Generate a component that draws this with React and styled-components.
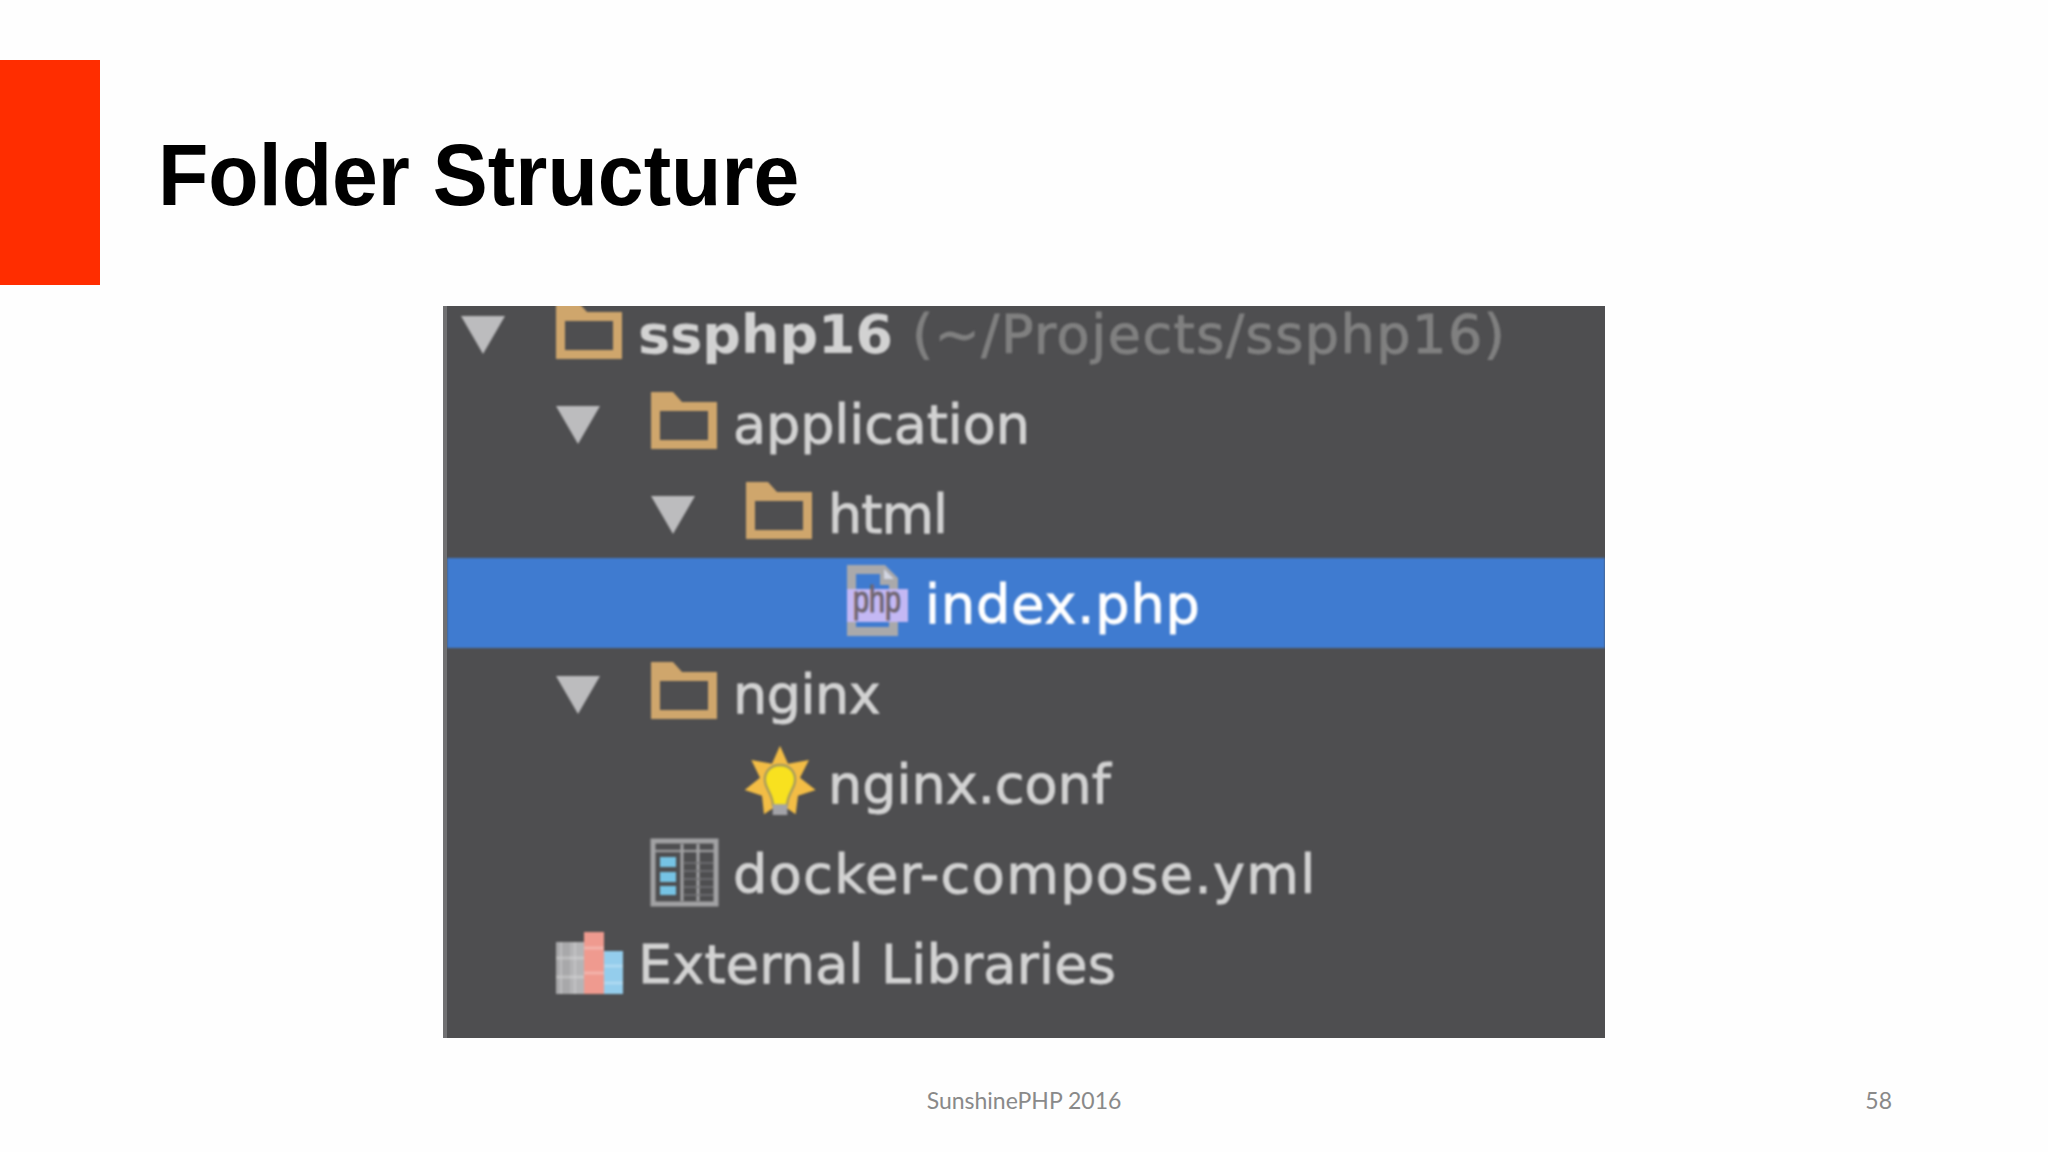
import styled, { createGlobalStyle } from 'styled-components'

const GlobalStyle = createGlobalStyle`
  html, body {
    margin: 0;
    background: #fefefe;
  }
`

const Slide = styled.div`
  width: 2048px;
  height: 1152px;
  padding-top: 60px;
  box-sizing: border-box;
  display: flex;
  flex-direction: column;
  overflow: hidden;
`

const Header = styled.header`
  display: flex;
  align-items: center;
  gap: 58px;
`

const RedBar = styled.div`
  width: 100px;
  height: 225px;
  background: #ff2d00;
`

const Title = styled.h1`
  margin: 5px 0 0;
  color: #000;
  font-family: 'Liberation Sans', sans-serif;
  font-size: 88px;
  font-weight: 700;
  transform: scaleX(0.937);
  transform-origin: left center;
`

const Tree = styled.section`
  width: 1162px;
  height: 732px;
  margin: 21px auto 0;
  box-sizing: border-box;
  border-left: 4px solid #707072;
  background: #4e4e50;
`

const Rows = styled.div`
  filter: blur(0.8px);
  clip-path: inset(0);
`

const Row = styled.div`
  height: ${(p) => (p.$top ? 72 : 90)}px;
  padding-bottom: ${(p) => (p.$top ? 18 : 0)}px;
  box-sizing: border-box;
  display: flex;
  align-items: center;
  padding-left: ${(p) => 14 + p.$level * 95}px;
  background: ${(p) => (p.$selected ? '#3f7bd0' : 'transparent')};
`

const ToggleSlot = styled.div`
  width: 95px;
  flex: none;
  display: flex;
  align-items: center;
  svg {
    display: block;
    margin-top: 4px;
  }
`

const IconSlot = styled.div`
  width: ${(p) => p.$width || 82}px;
  flex: none;
  display: flex;
  align-items: center;
  svg {
    display: block;
    overflow: visible;
    margin-top: ${(p) => p.$shift || 0}px;
    margin-left: ${(p) => p.$left || 0}px;
  }
`

const Label = styled.span`
  position: relative;
  top: 2px;
  font-family: 'DejaVu Sans', sans-serif;
  font-size: 54px;
  line-height: 1;
  white-space: nowrap;
  letter-spacing: ${(p) => p.$tracking || 0}px;
  color: ${(p) => (p.$selected ? '#ffffff' : '#d2d2d2')};
  font-weight: ${(p) => (p.$bold ? 700 : 400)};
  -webkit-text-stroke: ${(p) => (p.$bold ? 0 : 0.9)}px currentColor;
`

const Muted = styled.span`
  color: #808080;
  font-weight: 400;
  letter-spacing: 1.5px;
  -webkit-text-stroke: 0.9px currentColor;
`

const Footer = styled.footer`
  margin-top: 47px;
  display: grid;
  grid-template-columns: 1fr auto 1fr;
  color: #898989;
  font-family: Lato, sans-serif;
  font-size: 23px;
  line-height: 30px;
`

const PageNumber = styled.span`
  text-align: right;
  padding-right: 156px;
`

const Triangle = () => (
  <svg width="44" height="38" viewBox="0 0 44 38">
    <path d="M0 0H44L22 38Z" fill="#bcbcbe" />
  </svg>
)

const FolderIcon = () => (
  <svg width="66" height="57" viewBox="0 0 66 57">
    <path
      fillRule="evenodd"
      d="M0 0H22L31 10H66V57H0ZM9 19V48H57V19Z"
      fill="#cfa66c"
    />
  </svg>
)

const PhpIcon = () => (
  <svg width="62" height="72" viewBox="0 0 62 72">
    <path
      fillRule="evenodd"
      d="M0 0H38L51 13V71H0ZM9 9V62H42V20H33V9Z"
      fill="#a9a9ab"
    />
    <path d="M37 4L47 14H37Z" fill="#d3d6e2" />
    <rect x="0" y="24" width="61" height="33" fill="#c4b8f4" />
    <text
      x="30"
      y="47"
      textAnchor="middle"
      fontFamily="'Liberation Sans', sans-serif"
      fontSize="36"
      fontWeight="400"
      textLength="48"
      lengthAdjust="spacingAndGlyphs"
      stroke="#6f6570"
      strokeWidth="1"
      fill="#6f6570"
    >
      php
    </text>
  </svg>
)

const BulbIcon = () => (
  <svg width="72" height="72" viewBox="40 40 216 216">
    <path
      d="M148 42L172 96L235 85L208 138L255 175L202 192L195 248L148 215L100 248L94 192L42 175L88 138L62 85L124 96Z"
      fill="#f3bd45"
    />
    <path
      d="M148 100C115 100 100 125 103 150C106 175 125 185 127 222H169C171 185 190 175 193 150C196 125 181 100 148 100Z"
      fill="#f8e11f"
      stroke="#a59a5e"
      strokeWidth="7"
    />
    <rect x="126" y="218" width="44" height="32" fill="#a3a3a8" />
  </svg>
)

const TableIcon = () => (
  <svg width="67" height="67" viewBox="0 0 67 67">
    <rect x="2" y="2" width="63" height="63" fill="none" stroke="#a2a2a4" strokeWidth="5" />
    <path d="M4 12H63" stroke="#98989a" strokeWidth="2.5" />
    <path d="M31 5V62M47 5V62" stroke="#a2a2a4" strokeWidth="3" />
    <path d="M32 24H62M32 32H62M32 40H62M32 48H62M32 56H62" stroke="#767678" strokeWidth="1.5" />
    <rect x="9" y="18" width="16" height="10" fill="#76c3e4" />
    <rect x="9" y="33" width="16" height="10" fill="#76c3e4" />
    <rect x="9" y="47" width="16" height="9" fill="#76c3e4" />
  </svg>
)

const LibraryIcon = () => (
  <svg width="67" height="62" viewBox="0 0 67 62">
    <rect x="0" y="10" width="14" height="52" fill="#a8a8aa" />
    <rect x="14" y="10" width="14" height="52" fill="#b4b4b6" />
    <rect x="28" y="0" width="20" height="62" fill="#ef9a8f" />
    <rect x="48" y="19" width="19" height="43" fill="#94cdec" />
    <path d="M0 26H28M0 45H28M28 16H48M28 41H48M48 34H67M48 51H67" stroke="#ffffff" strokeOpacity="0.25" strokeWidth="3" />
    <path d="M5 10V62M19 10V62" stroke="#cfcfd1" strokeOpacity="0.5" strokeWidth="2" />
  </svg>
)

const TreeRow = ({ level, top, open, icon, selected, bold, tracking, slot, children }) => (
  <Row $level={level} $selected={selected} $top={top}>
    <ToggleSlot>{open && <Triangle />}</ToggleSlot>
    <IconSlot {...slot}>{icon}</IconSlot>
    <Label $selected={selected} $bold={bold} $tracking={tracking}>
      {children}
    </Label>
  </Row>
)

export default function App() {
  const folderSlot = { $shift: -5 }
  return (
    <Slide>
      <GlobalStyle />
      <Header>
        <RedBar />
        <Title>Folder Structure</Title>
      </Header>
      <Tree>
        <Rows>
          <TreeRow level={0} top open icon={<FolderIcon />} slot={folderSlot} bold>
            ssphp16 <Muted>(~/Projects/ssphp16)</Muted>
          </TreeRow>
          <TreeRow level={1} open icon={<FolderIcon />} slot={folderSlot} tracking={-0.1}>
            application
          </TreeRow>
          <TreeRow level={2} open icon={<FolderIcon />} slot={folderSlot} tracking={-1}>
            html
          </TreeRow>
          <TreeRow level={3} icon={<PhpIcon />} selected slot={{ $left: 6, $width: 84, $shift: -4 }} tracking={0.9}>
            index.php
          </TreeRow>
          <TreeRow level={1} open icon={<FolderIcon />} slot={folderSlot} tracking={-0.5}>
            nginx
          </TreeRow>
          <TreeRow level={2} icon={<BulbIcon />} slot={{ $left: -2, $shift: -4 }}>
            nginx.conf
          </TreeRow>
          <TreeRow level={1} icon={<TableIcon />} tracking={1.4} slot={{ $shift: -2 }}>
            docker-compose.yml
          </TreeRow>
          <TreeRow level={0} icon={<LibraryIcon />} tracking={0.2}>
            External Libraries
          </TreeRow>
        </Rows>
      </Tree>
      <Footer>
        <span />
        <span>SunshinePHP 2016</span>
        <PageNumber>58</PageNumber>
      </Footer>
    </Slide>
  )
}
